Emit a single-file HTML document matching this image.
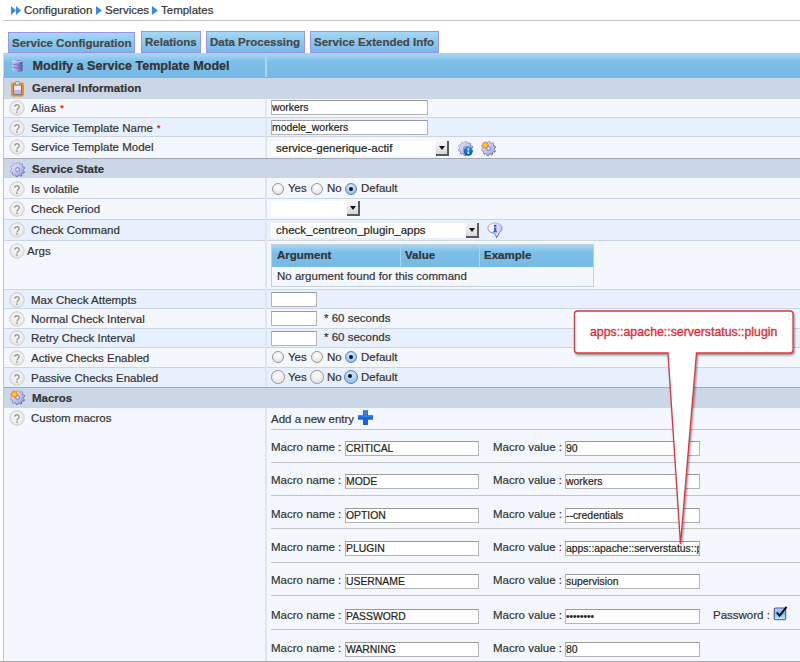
<!DOCTYPE html>
<html><head><meta charset="utf-8">
<style>
*{margin:0;padding:0;box-sizing:border-box}
html,body{width:800px;height:662px;overflow:hidden;background:#fff}
body{font-family:"Liberation Sans",sans-serif;font-size:11.5px;color:#333;position:relative;-webkit-text-stroke:0.2px currentColor}
div,span{position:absolute;white-space:nowrap}
.tab{top:31px;height:22px;border:1px solid #9d92e6;background:linear-gradient(#a6d7f5,#8ac8ef 50%,#78bae6);font-weight:bold;color:#474747;padding:4px 0 0 3px;line-height:13px}
.tab.act{top:32px;height:21px;z-index:3}
.r{left:3px;width:797px;border-bottom:1px solid #cad6e7;background:#f4f8fe}
.r.b{background:#e7f0fc}
.r .l{left:28px;top:4px;line-height:13px}
.qs{position:absolute;left:6px}
.q{left:6px;top:2px;width:15px;height:15px;border-radius:50%;border:1px solid #cdcdcd;background:radial-gradient(circle at 50% 40%,#fdfdfd,#ececec);color:#a8a8a8;font-size:11px;text-align:center;line-height:13px}
.sec{left:3px;width:797px;background:#cbd7e6;border-top:1px solid #a3a9b2;font-weight:bold;color:#333}
.sec .t{left:29px;top:4px;line-height:13px}
.vd{left:265px;width:2px;background:#dde6f2}
.inp{height:15px;border:1px solid #b4b4b4;border-top-color:#9a9a9a;background:#fff;line-height:14px;padding-left:0px;color:#222;font-size:10.4px}
.sel{height:15px;background:#fff}
.sel .ar{right:0;top:0;width:13px;height:15px;background:linear-gradient(#f6f6f6,#d8d8d8);border-right:2px solid #5a5a5a;border-bottom:2px solid #5a5a5a}
.sel .ar:after{content:"";position:absolute;left:3px;top:5px;border-left:3.5px solid transparent;border-right:3.5px solid transparent;border-top:4px solid #111}
.sel .v{left:5px;top:1px;line-height:13px;color:#222}
.req{position:relative;color:#e00;font-size:9px;top:-1px;left:1px}
.rad{width:12px;height:12px;border-radius:50%;border:1px solid #999;background:radial-gradient(circle at 50% 30%,#fff,#ddd)}
.rad.on{border-color:#5a86b8;background:radial-gradient(circle at 50% 30%,#d4ecff,#7fb6ee)}
.rad.on:after{content:"";position:absolute;left:3px;top:3px;width:4px;height:4px;border-radius:50%;background:#111}
.mt{left:271px;line-height:13px}
.sep{left:271px;width:529px;height:1px;background:#c4c4c4}
</style></head><body>
<!-- breadcrumb -->
<svg style="position:absolute;left:11px;top:6px" width="10" height="9" viewBox="0 0 10 9"><path d="M0 0L5 4.5L0 9Z M5 0L10 4.5L5 9Z" fill="#3d8ae6"/></svg>
<span style="left:24px;top:4px;line-height:13px">Configuration</span>
<svg style="position:absolute;left:96px;top:6px" width="6" height="9" viewBox="0 0 6 9"><path d="M0 0L6 4.5L0 9Z" fill="#3d8ae6"/></svg>
<span style="left:105px;top:4px;line-height:13px">Services</span>
<svg style="position:absolute;left:152px;top:6px" width="6" height="9" viewBox="0 0 6 9"><path d="M0 0L6 4.5L0 9Z" fill="#3d8ae6"/></svg>
<span style="left:161px;top:4px;line-height:13px">Templates</span>
<div style="left:3px;top:20px;width:797px;height:1px;background:#c6c6c6"></div>

<div class="tab act" style="left:8px;width:127px">Service Configuration</div>
<div class="tab" style="left:141px;width:60px">Relations</div>
<div class="tab" style="left:206px;width:99px">Data Processing</div>
<div class="tab" style="left:310px;width:129px">Service Extended Info</div>

<!-- header -->
<div style="left:3px;top:53px;width:797px;height:24px;background:linear-gradient(#a6d7f5,#7dbee9 35%,#77b9e6);border-left:1px solid #c9dcea;border-top:1px solid #bccbd8"></div>
<div style="left:265px;top:54px;width:2px;height:23px;background:#a9d6f3"></div>
<div style="left:32.5px;top:59px;font-weight:bold;font-size:12.6px;line-height:14px;color:#333">Modify a Service Template Model</div>

<!-- General Information -->
<div class="sec" style="top:77px;height:22px"><span class="t">General Information</span></div>
<div class="r " style="top:99px;height:19px"><svg class="qs" style="top:1px" width="16" height="16" viewBox="0 0 16 16"><circle cx="8" cy="8" r="7.2" fill="url(#qg)" stroke="#cdcdcd" stroke-width="1"/><path d="M5.8,6.7 C5.8,4.1 10.2,4.1 10.2,6.6 C10.2,8.4 8,8.5 8,10.4" fill="none" stroke="#999" stroke-width="1.4"/><circle cx="8" cy="12.1" r="0.9" fill="#999"/></svg><span class="l" style="top:3px">Alias <span class="req">*</span></span></div>
<div class="r b" style="top:118px;height:19px"><svg class="qs" style="top:2px" width="16" height="16" viewBox="0 0 16 16"><circle cx="8" cy="8" r="7.2" fill="url(#qg)" stroke="#cdcdcd" stroke-width="1"/><path d="M5.8,6.7 C5.8,4.1 10.2,4.1 10.2,6.6 C10.2,8.4 8,8.5 8,10.4" fill="none" stroke="#999" stroke-width="1.4"/><circle cx="8" cy="12.1" r="0.9" fill="#999"/></svg><span class="l" style="top:4px">Service Template Name <span class="req">*</span></span></div>
<div class="r " style="top:137px;height:21px;border-bottom:none"><svg class="qs" style="top:2px" width="16" height="16" viewBox="0 0 16 16"><circle cx="8" cy="8" r="7.2" fill="url(#qg)" stroke="#cdcdcd" stroke-width="1"/><path d="M5.8,6.7 C5.8,4.1 10.2,4.1 10.2,6.6 C10.2,8.4 8,8.5 8,10.4" fill="none" stroke="#999" stroke-width="1.4"/><circle cx="8" cy="12.1" r="0.9" fill="#999"/></svg><span class="l" style="top:4px">Service Template Model</span></div>
<div class="sec" style="top:158px;height:20px"><span class="t">Service State</span></div>
<div class="r " style="top:178px;height:21px"><svg class="qs" style="top:3px" width="16" height="16" viewBox="0 0 16 16"><circle cx="8" cy="8" r="7.2" fill="url(#qg)" stroke="#cdcdcd" stroke-width="1"/><path d="M5.8,6.7 C5.8,4.1 10.2,4.1 10.2,6.6 C10.2,8.4 8,8.5 8,10.4" fill="none" stroke="#999" stroke-width="1.4"/><circle cx="8" cy="12.1" r="0.9" fill="#999"/></svg><span class="l" style="top:5px">Is volatile</span></div>
<div class="r " style="top:199px;height:21px"><svg class="qs" style="top:2px" width="16" height="16" viewBox="0 0 16 16"><circle cx="8" cy="8" r="7.2" fill="url(#qg)" stroke="#cdcdcd" stroke-width="1"/><path d="M5.8,6.7 C5.8,4.1 10.2,4.1 10.2,6.6 C10.2,8.4 8,8.5 8,10.4" fill="none" stroke="#999" stroke-width="1.4"/><circle cx="8" cy="12.1" r="0.9" fill="#999"/></svg><span class="l" style="top:4px">Check Period</span></div>
<div class="r b" style="top:220px;height:21px"><svg class="qs" style="top:2px" width="16" height="16" viewBox="0 0 16 16"><circle cx="8" cy="8" r="7.2" fill="url(#qg)" stroke="#cdcdcd" stroke-width="1"/><path d="M5.8,6.7 C5.8,4.1 10.2,4.1 10.2,6.6 C10.2,8.4 8,8.5 8,10.4" fill="none" stroke="#999" stroke-width="1.4"/><circle cx="8" cy="12.1" r="0.9" fill="#999"/></svg><span class="l" style="top:4px">Check Command</span></div>
<div class="r " style="top:241px;height:49px"><svg class="qs" style="top:2px" width="16" height="16" viewBox="0 0 16 16"><circle cx="8" cy="8" r="7.2" fill="url(#qg)" stroke="#cdcdcd" stroke-width="1"/><path d="M5.8,6.7 C5.8,4.1 10.2,4.1 10.2,6.6 C10.2,8.4 8,8.5 8,10.4" fill="none" stroke="#999" stroke-width="1.4"/><circle cx="8" cy="12.1" r="0.9" fill="#999"/></svg><span class="l" style="left:24px;top:4px">Args</span></div>
<div class="r b" style="top:290px;height:19px"><svg class="qs" style="top:2px" width="16" height="16" viewBox="0 0 16 16"><circle cx="8" cy="8" r="7.2" fill="url(#qg)" stroke="#cdcdcd" stroke-width="1"/><path d="M5.8,6.7 C5.8,4.1 10.2,4.1 10.2,6.6 C10.2,8.4 8,8.5 8,10.4" fill="none" stroke="#999" stroke-width="1.4"/><circle cx="8" cy="12.1" r="0.9" fill="#999"/></svg><span class="l" style="top:3.5px">Max Check Attempts</span></div>
<div class="r " style="top:309px;height:20px"><svg class="qs" style="top:2px" width="16" height="16" viewBox="0 0 16 16"><circle cx="8" cy="8" r="7.2" fill="url(#qg)" stroke="#cdcdcd" stroke-width="1"/><path d="M5.8,6.7 C5.8,4.1 10.2,4.1 10.2,6.6 C10.2,8.4 8,8.5 8,10.4" fill="none" stroke="#999" stroke-width="1.4"/><circle cx="8" cy="12.1" r="0.9" fill="#999"/></svg><span class="l" style="top:4px">Normal Check Interval</span></div>
<div class="r b" style="top:329px;height:19px"><svg class="qs" style="top:1px" width="16" height="16" viewBox="0 0 16 16"><circle cx="8" cy="8" r="7.2" fill="url(#qg)" stroke="#cdcdcd" stroke-width="1"/><path d="M5.8,6.7 C5.8,4.1 10.2,4.1 10.2,6.6 C10.2,8.4 8,8.5 8,10.4" fill="none" stroke="#999" stroke-width="1.4"/><circle cx="8" cy="12.1" r="0.9" fill="#999"/></svg><span class="l" style="top:3px">Retry Check Interval</span></div>
<div class="r " style="top:348px;height:20px"><svg class="qs" style="top:2px" width="16" height="16" viewBox="0 0 16 16"><circle cx="8" cy="8" r="7.2" fill="url(#qg)" stroke="#cdcdcd" stroke-width="1"/><path d="M5.8,6.7 C5.8,4.1 10.2,4.1 10.2,6.6 C10.2,8.4 8,8.5 8,10.4" fill="none" stroke="#999" stroke-width="1.4"/><circle cx="8" cy="12.1" r="0.9" fill="#999"/></svg><span class="l" style="top:4px">Active Checks Enabled</span></div>
<div class="r b" style="top:368px;height:19px;border-bottom:none"><svg class="qs" style="top:2px" width="16" height="16" viewBox="0 0 16 16"><circle cx="8" cy="8" r="7.2" fill="url(#qg)" stroke="#cdcdcd" stroke-width="1"/><path d="M5.8,6.7 C5.8,4.1 10.2,4.1 10.2,6.6 C10.2,8.4 8,8.5 8,10.4" fill="none" stroke="#999" stroke-width="1.4"/><circle cx="8" cy="12.1" r="0.9" fill="#999"/></svg><span class="l" style="top:4px">Passive Checks Enabled</span></div>
<div class="sec" style="top:387px;height:21px"><span class="t">Macros</span></div>
<div class="r " style="top:408px;height:253px;border-bottom:none"><svg class="qs" style="top:2px" width="16" height="16" viewBox="0 0 16 16"><circle cx="8" cy="8" r="7.2" fill="url(#qg)" stroke="#cdcdcd" stroke-width="1"/><path d="M5.8,6.7 C5.8,4.1 10.2,4.1 10.2,6.6 C10.2,8.4 8,8.5 8,10.4" fill="none" stroke="#999" stroke-width="1.4"/><circle cx="8" cy="12.1" r="0.9" fill="#999"/></svg><span class="l" style="top:4px">Custom macros</span></div>
<div class="vd" style="top:99px;height:59px"></div>
<div class="vd" style="top:178px;height:209px"></div>
<div class="vd" style="top:408px;height:253px"></div>

<!-- right column -->
<div class="inp" style="left:271px;top:100px;width:157px">workers</div>
<div class="inp" style="left:271px;top:120px;width:157px">modele_workers</div>
<div class="sel" style="left:271px;top:141px;width:178px"><span class="v">service-generique-actif</span><span class="ar"></span></div>

<div class="rad" style="left:272px;top:183px"></div><span style="left:288px;top:182px">Yes</span>
<div class="rad" style="left:311px;top:183px"></div><span style="left:327px;top:182px">No</span>
<div class="rad on" style="left:345px;top:183px"></div><span style="left:361px;top:182px">Default</span>

<div class="sel" style="left:271px;top:201px;width:89px"><span class="ar"></span></div>
<div class="sel" style="left:271px;top:223px;width:208px"><span class="v">check_centreon_plugin_apps</span><span class="ar"></span></div>

<!-- args table -->
<div style="left:271px;top:244px;width:323px;height:43px;border:1px solid #c3cfdc;background:#f4f7fd"></div>
<div style="left:272px;top:245px;width:321px;height:22px;background:linear-gradient(#a3d4f3,#7dbee9 35%,#77b9e6)"></div>
<div style="left:400px;top:245px;width:1px;height:22px;background:#a9d6f3"></div>
<div style="left:479px;top:245px;width:1px;height:22px;background:#a9d6f3"></div>
<span style="left:277px;top:249px;font-weight:bold;line-height:13px">Argument</span>
<span style="left:405px;top:249px;font-weight:bold;line-height:13px">Value</span>
<span style="left:484px;top:249px;font-weight:bold;line-height:13px">Example</span>
<span style="left:277px;top:270px;line-height:13px">No argument found for this command</span>

<div class="inp" style="left:271px;top:292px;width:46px"></div>
<div class="inp" style="left:271px;top:311px;width:46px"></div><span style="left:324px;top:312px;line-height:13px">* 60 seconds</span>
<div class="inp" style="left:271px;top:331px;width:46px"></div><span style="left:324px;top:331px;line-height:13px">* 60 seconds</span>

<div class="rad" style="left:272px;top:351px"></div><span style="left:288px;top:351px">Yes</span>
<div class="rad" style="left:311px;top:351px"></div><span style="left:327px;top:351px">No</span>
<div class="rad on" style="left:345px;top:351px"></div><span style="left:361px;top:351px">Default</span>
<div class="rad" style="left:271px;top:370px;width:13.5px;height:13.5px"></div><span style="left:288px;top:371px">Yes</span>
<div class="rad" style="left:310px;top:370px;width:13.5px;height:13.5px"></div><span style="left:327px;top:371px">No</span>
<div class="rad on" style="left:344px;top:369.5px;width:14px;height:14px"></div><span style="left:361px;top:371px">Default</span>

<!-- macros -->
<span class="mt" style="top:413px">Add a new entry</span>

<div class="sep" style="top:429px"></div>
<span class="mt" style="top:441px">Macro name :</span>
<div class="inp" style="left:345px;top:441px;width:134px">CRITICAL</div>
<span style="left:493px;top:441px;line-height:13px">Macro value :</span>
<div class="inp" style="left:565px;top:441px;width:135px;overflow:hidden">90</div>
<div class="sep" style="top:462px"></div>
<span class="mt" style="top:474px">Macro name :</span>
<div class="inp" style="left:345px;top:474px;width:134px">MODE</div>
<span style="left:493px;top:474px;line-height:13px">Macro value :</span>
<div class="inp" style="left:565px;top:474px;width:135px;overflow:hidden">workers</div>
<div class="sep" style="top:495px"></div>
<span class="mt" style="top:508px">Macro name :</span>
<div class="inp" style="left:345px;top:508px;width:134px">OPTION</div>
<span style="left:493px;top:508px;line-height:13px">Macro value :</span>
<div class="inp" style="left:565px;top:508px;width:135px;overflow:hidden">--credentials</div>
<div class="sep" style="top:528px"></div>
<span class="mt" style="top:541px">Macro name :</span>
<div class="inp" style="left:345px;top:541px;width:134px">PLUGIN</div>
<span style="left:493px;top:541px;line-height:13px">Macro value :</span>
<div class="inp" style="left:565px;top:541px;width:135px;overflow:hidden">apps::apache::serverstatus::plugin</div>
<div class="sep" style="top:562px"></div>
<span class="mt" style="top:574px">Macro name :</span>
<div class="inp" style="left:345px;top:574px;width:134px">USERNAME</div>
<span style="left:493px;top:574px;line-height:13px">Macro value :</span>
<div class="inp" style="left:565px;top:574px;width:135px;overflow:hidden">supervision</div>
<div class="sep" style="top:595px"></div>
<span class="mt" style="top:609px">Macro name :</span>
<div class="inp" style="left:345px;top:609px;width:134px">PASSWORD</div>
<span style="left:493px;top:609px;line-height:13px">Macro value :</span>
<div class="inp" style="left:565px;top:609px;width:135px;overflow:hidden;font-size:10px">&bull;&bull;&bull;&bull;&bull;&bull;&bull;&bull;</div>
<div class="sep" style="top:629px"></div>
<span class="mt" style="top:642px">Macro name :</span>
<div class="inp" style="left:345px;top:642px;width:134px">WARNING</div>
<span style="left:493px;top:642px;line-height:13px">Macro value :</span>
<div class="inp" style="left:565px;top:642px;width:135px;overflow:hidden">80</div>
<svg width="0" height="0" style="position:absolute"><defs>
<radialGradient id="qg" cx="0.5" cy="0.4" r="0.6"><stop offset="0" stop-color="#fafafa"/><stop offset="1" stop-color="#e6e6e6"/></radialGradient>
<linearGradient id="gg" x1="0" y1="0" x2="1" y2="1"><stop offset="0" stop-color="#eeeefa"/><stop offset="0.5" stop-color="#c4c4ec"/><stop offset="1" stop-color="#9a9ad8"/></linearGradient><linearGradient id="gs" x1="0" y1="0" x2="1" y2="1"><stop offset="0" stop-color="#b8b8e4"/><stop offset="1" stop-color="#4e4ea0"/></linearGradient>
<linearGradient id="db" x1="0" y1="0" x2="1" y2="0"><stop offset="0" stop-color="#c9c9f2"/><stop offset="0.5" stop-color="#9696da"/><stop offset="1" stop-color="#4f4f9a"/></linearGradient>
<radialGradient id="burst" cx="0.5" cy="0.5" r="0.5"><stop offset="0" stop-color="#ffe23a"/><stop offset="0.5" stop-color="#ffb020"/><stop offset="1" stop-color="#f04818"/></radialGradient>
<linearGradient id="rb" x1="0" y1="0" x2="0" y2="1"><stop offset="0" stop-color="#1a8bf0"/><stop offset="1" stop-color="#0a4fc0"/></linearGradient>
<linearGradient id="cb" x1="0" y1="0" x2="0" y2="1"><stop offset="0" stop-color="#a8d4fa"/><stop offset="0.5" stop-color="#7cbcf0"/><stop offset="1" stop-color="#c4f0ff"/></linearGradient>
</defs></svg>
<svg style="position:absolute;left:12px;top:59px" width="11" height="14" viewBox="0 0 11 14"><path d="M0.5 2 Q5.5 0 10.5 2 V12 Q5.5 14 0.5 12Z" fill="url(#db)"/><path d="M0.5 2 Q5.5 4 10.5 2" fill="none" stroke="#e8e8ff" stroke-width="0.8"/><path d="M1 5.3 Q5.5 7 10 5.3 M1 8.3 Q5.5 10 10 8.3" fill="none" stroke="#6a6ab8" stroke-width="0.8"/></svg>
<svg style="position:absolute;left:10px;top:81px" width="15" height="16" viewBox="0 0 15 16"><rect x="1" y="1.5" width="13" height="14" rx="2" fill="#f28c14"/><rect x="1.5" y="2" width="3" height="13" fill="#f8a030" opacity="0.6"/><rect x="3.5" y="4" width="8" height="9.5" fill="#e8e8f8" stroke="#7a7a7a" stroke-width="1"/><rect x="4" y="9" width="7" height="4" fill="#b8b8ec"/><rect x="5.5" y="0.5" width="4" height="3.5" rx="1" fill="#d8d8d8" stroke="#888" stroke-width="0.8"/></svg>
<svg style="position:absolute;left:9.5px;top:161.5px" width="15" height="15" viewBox="0 0 15 15"><path d="M13.28,8.67 L14.45,9.75 L13.90,11.01 L12.32,10.90 L11.49,11.85 L11.80,13.40 L10.62,14.10 L9.40,13.09 L8.17,13.36 L7.51,14.80 L6.14,14.67 L5.75,13.14 L4.60,12.64 L3.22,13.41 L2.18,12.50 L2.77,11.03 L2.13,9.95 L0.56,9.76 L0.26,8.42 L1.60,7.58 L1.72,6.33 L0.55,5.25 L1.10,3.99 L2.68,4.10 L3.51,3.15 L3.20,1.60 L4.38,0.90 L5.60,1.91 L6.83,1.64 L7.49,0.20 L8.86,0.33 L9.25,1.86 L10.40,2.36 L11.78,1.59 L12.82,2.50 L12.23,3.97 L12.87,5.05 L14.44,5.24 L14.74,6.58 L13.40,7.42Z" fill="url(#gg)" stroke="url(#gs)" stroke-width="0.9"/><circle cx="7.5" cy="7.5" r="1.9" fill="#e4e6f4" stroke="#7474b8" stroke-width="0.9"/></svg>
<svg style="position:absolute;left:9.5px;top:389.5px" width="15" height="15" viewBox="0 0 15 15"><path d="M13.28,8.67 L14.45,9.75 L13.90,11.01 L12.32,10.90 L11.49,11.85 L11.80,13.40 L10.62,14.10 L9.40,13.09 L8.17,13.36 L7.51,14.80 L6.14,14.67 L5.75,13.14 L4.60,12.64 L3.22,13.41 L2.18,12.50 L2.77,11.03 L2.13,9.95 L0.56,9.76 L0.26,8.42 L1.60,7.58 L1.72,6.33 L0.55,5.25 L1.10,3.99 L2.68,4.10 L3.51,3.15 L3.20,1.60 L4.38,0.90 L5.60,1.91 L6.83,1.64 L7.49,0.20 L8.86,0.33 L9.25,1.86 L10.40,2.36 L11.78,1.59 L12.82,2.50 L12.23,3.97 L12.87,5.05 L14.44,5.24 L14.74,6.58 L13.40,7.42Z" fill="url(#gg)" stroke="url(#gs)" stroke-width="0.9"/><circle cx="7.5" cy="7.5" r="1.9" fill="#e4e6f4" stroke="#7474b8" stroke-width="0.9"/><path d="M8.20,4.30 L6.79,5.33 L7.06,7.06 L5.33,6.79 L4.30,8.20 L3.27,6.79 L1.54,7.06 L1.81,5.33 L0.40,4.30 L1.81,3.27 L1.54,1.54 L3.27,1.81 L4.30,0.40 L5.33,1.81 L7.06,1.54 L6.79,3.27Z" fill="url(#burst)"/></svg>
<svg style="position:absolute;left:457.5px;top:140.5px" width="15" height="15" viewBox="0 0 15 15"><path d="M13.28,8.67 L14.45,9.75 L13.90,11.01 L12.32,10.90 L11.49,11.85 L11.80,13.40 L10.62,14.10 L9.40,13.09 L8.17,13.36 L7.51,14.80 L6.14,14.67 L5.75,13.14 L4.60,12.64 L3.22,13.41 L2.18,12.50 L2.77,11.03 L2.13,9.95 L0.56,9.76 L0.26,8.42 L1.60,7.58 L1.72,6.33 L0.55,5.25 L1.10,3.99 L2.68,4.10 L3.51,3.15 L3.20,1.60 L4.38,0.90 L5.60,1.91 L6.83,1.64 L7.49,0.20 L8.86,0.33 L9.25,1.86 L10.40,2.36 L11.78,1.59 L12.82,2.50 L12.23,3.97 L12.87,5.05 L14.44,5.24 L14.74,6.58 L13.40,7.42Z" fill="url(#gg)" stroke="url(#gs)" stroke-width="0.9"/><circle cx="7.5" cy="7.5" r="1.9" fill="#e4e6f4" stroke="#7474b8" stroke-width="0.9"/><circle cx="10.2" cy="10.2" r="4.6" fill="url(#rb)"/><rect x="9.4" y="7.2" width="1.8" height="2.4" fill="#dff0ff"/><rect x="9.4" y="10.6" width="1.8" height="2.4" fill="#dff0ff"/></svg>
<svg style="position:absolute;left:480.5px;top:140.5px" width="15" height="15" viewBox="0 0 15 15"><path d="M13.28,8.67 L14.45,9.75 L13.90,11.01 L12.32,10.90 L11.49,11.85 L11.80,13.40 L10.62,14.10 L9.40,13.09 L8.17,13.36 L7.51,14.80 L6.14,14.67 L5.75,13.14 L4.60,12.64 L3.22,13.41 L2.18,12.50 L2.77,11.03 L2.13,9.95 L0.56,9.76 L0.26,8.42 L1.60,7.58 L1.72,6.33 L0.55,5.25 L1.10,3.99 L2.68,4.10 L3.51,3.15 L3.20,1.60 L4.38,0.90 L5.60,1.91 L6.83,1.64 L7.49,0.20 L8.86,0.33 L9.25,1.86 L10.40,2.36 L11.78,1.59 L12.82,2.50 L12.23,3.97 L12.87,5.05 L14.44,5.24 L14.74,6.58 L13.40,7.42Z" fill="url(#gg)" stroke="url(#gs)" stroke-width="0.9"/><circle cx="7.5" cy="7.5" r="1.9" fill="#e4e6f4" stroke="#7474b8" stroke-width="0.9"/><path d="M8.20,4.30 L6.79,5.33 L7.06,7.06 L5.33,6.79 L4.30,8.20 L3.27,6.79 L1.54,7.06 L1.81,5.33 L0.40,4.30 L1.81,3.27 L1.54,1.54 L3.27,1.81 L4.30,0.40 L5.33,1.81 L7.06,1.54 L6.79,3.27Z" fill="url(#burst)"/></svg>
<svg style="position:absolute;left:486.5px;top:222px" width="16" height="16" viewBox="0 0 16 16"><defs><linearGradient id="ib" x1="0" y1="0" x2="1" y2="0"><stop offset="0" stop-color="#fbf9ff"/><stop offset="0.5" stop-color="#f0ecff"/><stop offset="1" stop-color="#c2bdef"/></linearGradient><linearGradient id="ibs" x1="0" y1="0" x2="0" y2="1"><stop offset="0" stop-color="#a8a8d8"/><stop offset="1" stop-color="#505068"/></linearGradient></defs><path d="M8,1 C3.8,1 1,3.4 1,6.2 C1,8.9 3.6,11 7.4,11.1 C8.5,12.4 9.1,14 9.5,15.6 C10.9,14 11.8,12.3 12.2,10.6 C14,9.7 15,8 15,6.2 C15,3.4 12.2,1 8,1Z" fill="url(#ib)" stroke="url(#ibs)" stroke-width="0.9"/><rect x="7" y="2.8" width="2.4" height="1.9" fill="#1f55c8"/><rect x="7" y="5.4" width="2.4" height="4.6" fill="#1f6ae8"/><rect x="6.3" y="9.2" width="3.8" height="1.1" fill="#1f6ae8"/></svg>
<svg style="position:absolute;left:358px;top:410px" width="15" height="15" viewBox="0 0 15 15"><path d="M5 0.3H10V5.3H15V9.8H10V15H5V9.8H0V5.3H5Z" fill="#1765d8"/><path d="M5.6 0.9H9.4V6.2H14.4V7.2H5.6 0.6V6.2H5.6Z" fill="#3f8ff0" opacity="0.7"/></svg>
<span style="left:713px;top:609px;line-height:13px">Password :</span>
<svg style="position:absolute;left:773px;top:606px" width="15" height="15" viewBox="0 0 15 15"><rect x="1.2" y="2" width="11.5" height="11.8" rx="1.5" fill="url(#cb)" stroke="#53539d" stroke-width="1.1"/><path d="M3.8 6.3 L6.6 9.6 L13.6 0.9" fill="none" stroke="#0a0a1e" stroke-width="2"/></svg>
<svg style="position:absolute;left:568px;top:305px;z-index:10" width="232" height="245" viewBox="568 305 232 245"><defs><filter id="sh" x="-10%" y="-10%" width="130%" height="130%"><feDropShadow dx="1" dy="1.5" stdDeviation="0.8" flood-color="#000" flood-opacity="0.45"/></filter></defs><path d="M577.5,311 H790 Q793,311 793,314 V350 Q793,353 790,353 H696.5 L680.5,544 L668,353 H577.5 Q574.5,353 574.5,350 V314 Q574.5,311 577.5,311 Z" fill="#fff" stroke="#e0343a" stroke-width="1.3" filter="url(#sh)"/></svg>
<span style="left:590px;top:326px;z-index:11;color:#e8252b;font-size:12.3px;line-height:13px;-webkit-text-stroke:0.3px #e8252b">apps::apache::serverstatus::plugin</span>
<div style="left:0;top:661px;width:800px;height:1px;background:#a9a9a9"></div>
<div style="left:3px;top:77px;width:1px;height:584px;background:#b8c7d9;z-index:2"></div>
</body></html>
